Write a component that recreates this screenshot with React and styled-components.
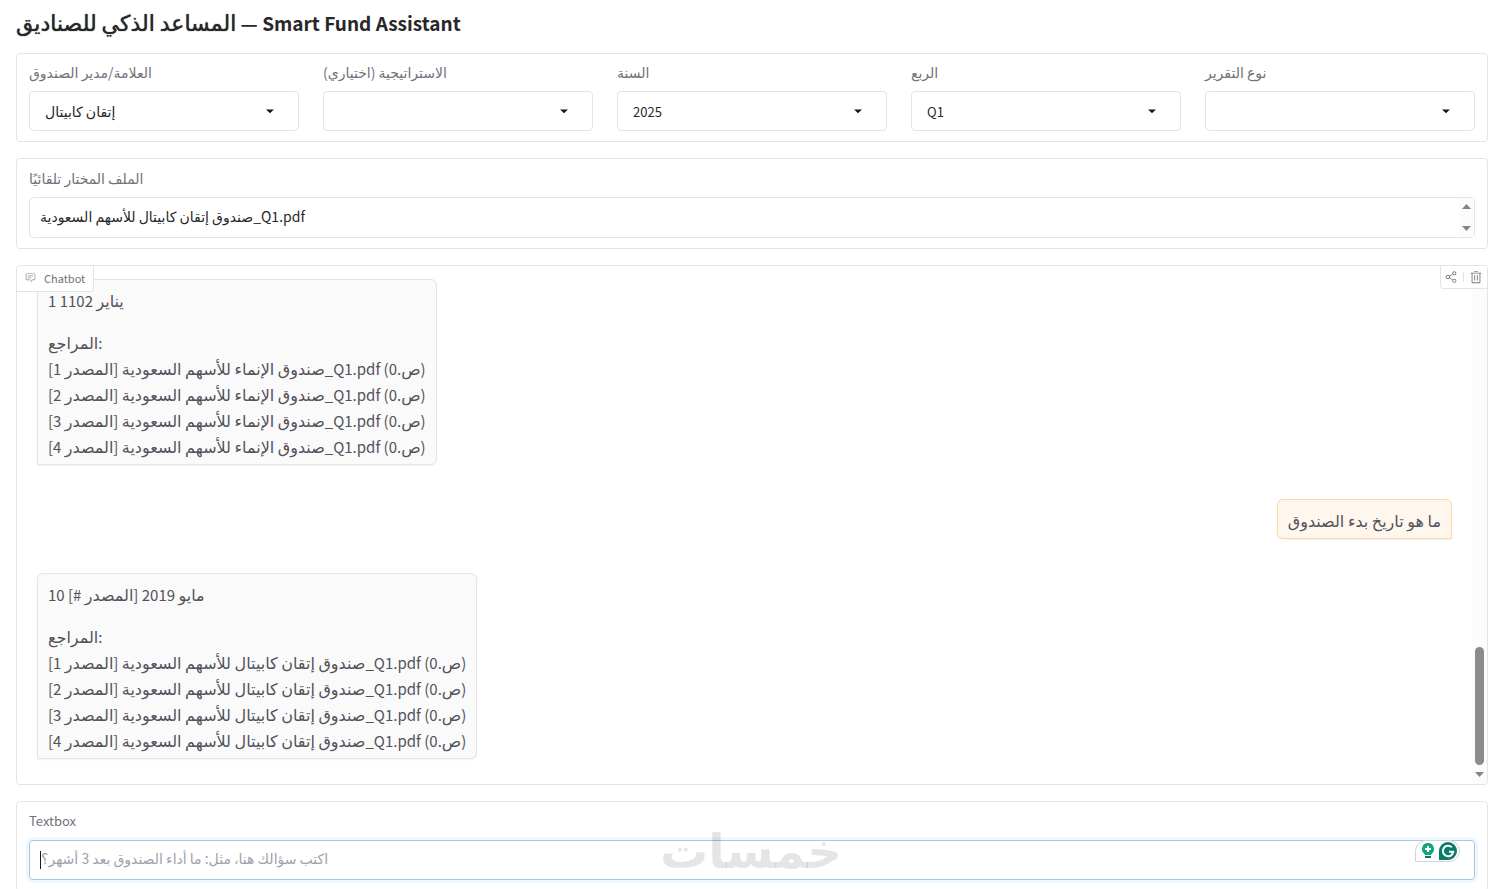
import React from 'react';
import styled, { createGlobalStyle } from 'styled-components';

const GlobalStyle = createGlobalStyle`
  * {
    box-sizing: border-box;
  }

  body {
    margin: 0;
    background: #fff;
    color: #27272a;
    font-family: 'Noto Sans CJK SC', 'DejaVu Sans', sans-serif;
    font-size: 14px;
  }

  button,
  select,
  textarea {
    font: inherit;
    color: inherit;
  }
`;

const Page = styled.main`
  display: flex;
  flex-direction: column;
  gap: 16px;
  padding: 8px 14px 16px 16px;
`;

const Title = styled.h1`
  margin: 0;
  height: 29px;
  font-size: 19px;
  line-height: 26px;
  font-weight: 700;
`;

const TitleArabic = styled.span`
  font-size: 22px;
  font-weight: 400;
  text-shadow: 0 0 1px currentColor;
`;

const Block = styled.section`
  border: 1px solid #e4e4e7;
  border-radius: 4px;
  padding: 10px 12px;
`;

const Filters = styled(Block)`
  display: grid;
  grid-template-columns: repeat(5, 1fr);
  gap: 24px;
  padding-top: 9px;
`;

const Field = styled.div`
  display: flex;
  flex-direction: column;
  gap: 10px;
  min-width: 0;
`;

const Label = styled.label`
  font-size: ${(p) => (p.$latin ? '13px' : '14px')};
  line-height: 18px;
  color: #71717a;
`;

const SelectBox = styled.div`
  display: grid;
  align-items: center;

  & > * {
    grid-area: 1 / 1;
  }
`;

const Select = styled.select`
  appearance: none;
  width: 100%;
  height: 40px;
  padding: 0 40px 0 15px;
  border: 1px solid #e4e4e7;
  border-radius: 4px;
  background: #fff;
  font-size: ${(p) => (p.$latin ? '13px' : '14px')};
`;

const Caret = styled.svg`
  justify-self: end;
  margin-right: 20px;
  pointer-events: none;
`;

const InputBox = styled.div`
  display: flex;
  align-items: center;
  height: ${(p) => (p.$focused ? '40px' : '41px')};
  padding-left: 10px;
  border: 1px solid ${(p) => (p.$focused ? '#a5c8ea' : '#e4e4e7')};
  border-radius: 4px;
  box-shadow: ${(p) => (p.$focused ? '0 0 0 3px #eff8ff' : 'none')};
`;

const TextArea = styled.textarea`
  flex: 1;
  height: 26px;
  padding: 0 0 4px;
  border: 0;
  outline: 0;
  resize: none;
  overflow: hidden;
  background: transparent;
  font-size: 14px;
  line-height: 22px;

  &::placeholder {
    color: #a1a1aa;
    opacity: 1;
  }
`;

const TextCursor = styled.span`
  width: 1px;
  height: 18px;
  background: #18181b;
`;

const Steppers = styled.div`
  display: flex;
  flex-direction: column;
  justify-content: space-between;
  align-items: center;
  width: 15px;
  height: 100%;
  padding: 6px 0;
  background: #fcfcfc;
`;

const Chat = styled(Block)`
  position: relative;
  display: flex;
  height: 520px;
  padding: 0;
  overflow: hidden;
`;

const ChatLabel = styled.div`
  position: absolute;
  top: 0;
  left: 0;
  display: flex;
  align-items: center;
  gap: 8px;
  height: 26px;
  padding: 0 8px 2px;
  border: solid #e4e4e7;
  border-width: 0 1px 1px 0;
  border-radius: 0 0 4px 0;
  background: #fff;
  color: #71717a;
  font-size: 11px;
`;

const Actions = styled.div`
  position: absolute;
  top: 0;
  right: 0;
  display: flex;
  align-items: center;
  gap: 5px;
  height: 23px;
  padding: 0 4px;
  border: solid #e4e4e7;
  border-width: 0 0 1px 1px;
  border-radius: 0 0 0 4px;
  background: #fff;
`;

const IconButton = styled.button`
  display: flex;
  padding: 0;
  border: 0;
  background: none;
  color: #71717a;
`;

const Divider = styled.span`
  width: 1px;
  height: 10px;
  background: #e4e4e7;
`;

const Messages = styled.div`
  flex: 1;
  display: flex;
  flex-direction: column;
  align-items: flex-start;
  gap: 34px;
  padding: 13px 20px;
`;

const Bubble = styled.div`
  align-self: ${(p) => (p.$user ? 'flex-end' : 'flex-start')};
  padding: 7px 10px 5px;
  border: 1px solid ${(p) => (p.$user ? '#fed7aa' : '#e4e4e7')};
  border-radius: ${(p) => (p.$user ? '6px 6px 0 6px' : '6px 6px 6px 0')};
  background: ${(p) => (p.$user ? '#fff7ed' : '#fafafa')};
  box-shadow: 0 1px 2px rgba(0, 0, 0, 0.05);
  color: #52525b;
  font-size: 15px;
  line-height: 26px;
`;

const Paragraph = styled.p`
  margin: 0;

  & + & {
    margin-top: 16px;
  }
`;

const Line = styled.span`
  display: block;
  height: 26px;
`;

const Arabic = styled.span`
  font-size: 16px;
`;

const Scrollbar = styled.div`
  display: flex;
  flex-direction: column;
  justify-content: flex-end;
  align-items: center;
  gap: 7px;
  width: 15px;
  padding-bottom: 7px;
  background: #fcfcfc;
`;

const Thumb = styled.div`
  width: 9px;
  height: 118px;
  border-radius: 5px;
  background: #8b8b8b;
`;

const Helper = styled.div`
  align-self: flex-start;
  display: flex;
  align-items: center;
  gap: 4px;
  height: 22px;
  margin: -1px 14px 0 0;
  padding: 0 2px 0 5px;
  border: 1px solid #d4d4d8;
  border-radius: 11px 11px 11px 0;
  background: #fff;
`;

const Watermark = styled.div`
  position: fixed;
  left: 0;
  right: 0;
  bottom: 8px;
  text-align: center;
  font-family: 'DejaVu Sans', sans-serif;
  font-size: 48px;
  font-weight: 700;
  line-height: 60px;
  color: rgba(0, 0, 0, 0.1);
  pointer-events: none;
`;

const Arrow = ({ up }) => (
  <svg width="9" height="5" viewBox="0 0 9 5" fill="#858585">
    <path d={up ? 'M0 5 4.5 0 9 5z' : 'M0 0h9L4.5 5z'} />
  </svg>
);

const ChatIcon = () => (
  <svg width="11" height="11" viewBox="0 0 32 32" fill="#8b8b93">
    <path d="M17.74 30 16 29l4-7h6a2 2 0 0 0 2-2V8a2 2 0 0 0-2-2H6a2 2 0 0 0-2 2v12a2 2 0 0 0 2 2h9v2H6a4 4 0 0 1-4-4V8a4 4 0 0 1 4-4h20a4 4 0 0 1 4 4v12a4 4 0 0 1-4 4h-4.84z" />
    <path d="M8 10h16v2H8zM8 16h10v2H8z" />
  </svg>
);

const ShareIcon = () => (
  <svg width="13" height="14" viewBox="0 0 32 32" fill="currentColor">
    <path d="M23 20a5 5 0 0 0-3.89 1.89l-7.31-4.57a4.46 4.46 0 0 0 0-2.64l7.31-4.57A5 5 0 1 0 18 7a4.79 4.79 0 0 0 .2 1.32l-7.31 4.57a5 5 0 1 0 0 6.22l7.31 4.57A4.79 4.79 0 0 0 18 25a5 5 0 1 0 5-5zm0-16a3 3 0 1 1-3 3 3 3 0 0 1 3-3zM7 19a3 3 0 1 1 3-3 3 3 0 0 1-3 3zm16 9a3 3 0 1 1 3-3 3 3 0 0 1-3 3z" />
  </svg>
);

const TrashIcon = () => (
  <svg width="14" height="14" viewBox="0 0 32 32" fill="currentColor">
    <path d="M12 12h2v12h-2zM18 12h2v12h-2z" />
    <path d="M4 6v2h2v20a2 2 0 0 0 2 2h16a2 2 0 0 0 2-2V8h2V6zm4 22V8h16v20zM12 2h8v2h-8z" />
  </svg>
);

const BulbIcon = () => (
  <svg width="14" height="16" viewBox="0 0 14 16">
    <path d="M7 0a6 6 0 0 1 3.500 10.900L10 12H4l-.500-1.100A6 6 0 0 1 7 0z" fill="#12a67f" />
    <path d="M7 3v6M4 6h6" stroke="#fff" strokeWidth="2" />
    <path d="M4 14h6" stroke="#0b7a62" strokeWidth="2" />
  </svg>
);

const CheckerIcon = () => (
  <svg width="18" height="18" viewBox="0 0 18 18">
    <path d="M9 0a9 9 0 1 1 0 18H0V9a9 9 0 0 1 9-9z" fill="#0b7a66" />
    <path d="M12.800 5.400A5.200 5.200 0 1 0 14.200 9.800H10" fill="none" stroke="#fff" strokeWidth="2" />
  </svg>
);

// Arabic runs are set a little larger than the Latin text around them
const runs = /[\u0600-\u06ff]+(?: [\u0600-\u06ff]+)*|[\])] ?|[^\u0600-\u06ff\])]+/g;

const Mixed = ({ text }) =>
  text
    .match(runs)
    .map((run, i) => (/[\u0600-\u06ff]/.test(run) ? <Arabic key={i}>{run}</Arabic> : run));

const filters = [
  { id: 'brand', label: 'العلامة/مدير الصندوق', value: 'إتقان كابيتال' },
  { id: 'strategy', label: 'الاستراتيجية (اختياري)', value: '' },
  { id: 'year', label: 'السنة', value: '2025', latin: true },
  { id: 'quarter', label: 'الربع', value: 'Q1', latin: true },
  { id: 'report', label: 'نوع التقرير', value: '' },
];

const references = (fund) => [
  'المراجع:',
  ...[1, 2, 3, 4].map((n) => `[المصدر ${n}] ${fund}_Q1.pdf (ص.0)`),
];

const messages = [
  { parts: [['1 يناير 1102'], references('صندوق الإنماء للأسهم السعودية')] },
  { user: true, parts: [['ما هو تاريخ بدء الصندوق']] },
  { parts: [['10 مايو 2019 [المصدر #]'], references('صندوق إتقان كابيتال للأسهم السعودية')] },
];

const App = () => {
  return (
    <>
      <GlobalStyle />
      <Page>
        <Title>
          <TitleArabic>المساعد الذكي للصناديق</TitleArabic> — Smart Fund Assistant
        </Title>

        <Filters>
          {filters.map((f) => (
            <Field key={f.id}>
              <Label htmlFor={f.id}>{f.label}</Label>
              <SelectBox>
                <Select id={f.id} defaultValue={f.value} $latin={f.latin}>
                  <option value={f.value}>{f.value}</option>
                </Select>
                <Caret width="18" height="18" viewBox="0 0 18 18" fill="#18181b">
                  <path d="M5 7.500 9 11.300l4-3.800z" />
                </Caret>
              </SelectBox>
            </Field>
          ))}
        </Filters>

        <Block>
          <Field>
            <Label htmlFor="file">الملف المختار تلقائيًا</Label>
            <InputBox>
              <TextArea id="file" rows={1} readOnly value="صندوق إتقان كابيتال للأسهم السعودية_Q1.pdf" />
              <Steppers>
                <Arrow up />
                <Arrow />
              </Steppers>
            </InputBox>
          </Field>
        </Block>

        <Chat>
          <Messages>
            {messages.map((m, i) => (
              <Bubble key={i} $user={m.user}>
                {m.parts.map((lines, j) => (
                  <Paragraph key={j}>
                    {lines.map((line) => (
                      <Line key={line}>
                        <Mixed text={line} />
                      </Line>
                    ))}
                  </Paragraph>
                ))}
              </Bubble>
            ))}
          </Messages>
          <Scrollbar>
            <Thumb />
            <Arrow />
          </Scrollbar>
          <ChatLabel>
            <ChatIcon />
            Chatbot
          </ChatLabel>
          <Actions>
            <IconButton aria-label="Share">
              <ShareIcon />
            </IconButton>
            <Divider />
            <IconButton aria-label="Clear">
              <TrashIcon />
            </IconButton>
          </Actions>
        </Chat>

        <Block>
          <Field>
            <Label htmlFor="question" $latin>
              Textbox
            </Label>
            <InputBox $focused>
              <TextCursor />
              <TextArea id="question" rows={1} placeholder="اكتب سؤالك هنا، مثل: ما أداء الصندوق بعد 3 أشهر؟" />
              <Helper>
                <BulbIcon />
                <CheckerIcon />
              </Helper>
            </InputBox>
          </Field>
        </Block>
      </Page>
      <Watermark>خمسات</Watermark>
    </>
  );
};

export default App;
